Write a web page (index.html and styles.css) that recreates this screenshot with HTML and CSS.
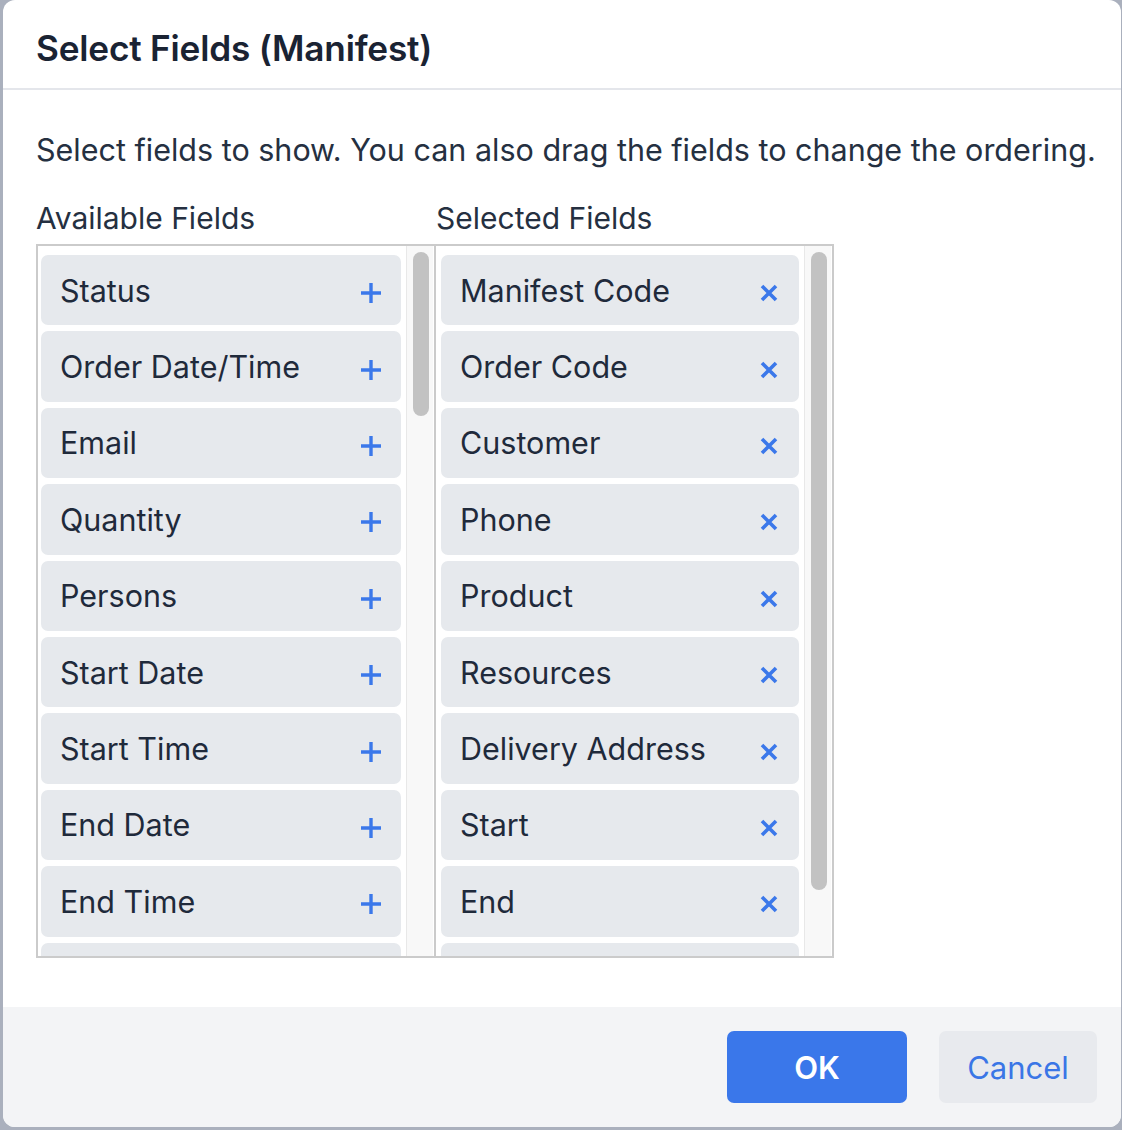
FILE: index.html
```html
<!DOCTYPE html>
<html lang="en">
<head>
<meta charset="utf-8">
<title>Select Fields (Manifest)</title>
<link rel="stylesheet" href="styles.css">
</head>
<body>
<div class="dialog">
  <div class="header"><h1 class="title">Select Fields (Manifest)</h1></div>
  <div class="content">
    <p class="desc">Select fields to show. You can also drag the fields to change the ordering.</p>
    <div class="labels">
      <div class="label">Available Fields</div>
      <div class="label">Selected Fields</div>
    </div>
    <div class="lists">
      <div class="col col-left">
        <div class="items">
          <div class="item"><span>Status</span><svg class="ico-plus" viewBox="0 0 22 22"><path d="M11 1V21M1 11H21"/></svg></div>
          <div class="item"><span>Order Date/Time</span><svg class="ico-plus" viewBox="0 0 22 22"><path d="M11 1V21M1 11H21"/></svg></div>
          <div class="item"><span>Email</span><svg class="ico-plus" viewBox="0 0 22 22"><path d="M11 1V21M1 11H21"/></svg></div>
          <div class="item"><span>Quantity</span><svg class="ico-plus" viewBox="0 0 22 22"><path d="M11 1V21M1 11H21"/></svg></div>
          <div class="item"><span>Persons</span><svg class="ico-plus" viewBox="0 0 22 22"><path d="M11 1V21M1 11H21"/></svg></div>
          <div class="item"><span>Start Date</span><svg class="ico-plus" viewBox="0 0 22 22"><path d="M11 1V21M1 11H21"/></svg></div>
          <div class="item"><span>Start Time</span><svg class="ico-plus" viewBox="0 0 22 22"><path d="M11 1V21M1 11H21"/></svg></div>
          <div class="item"><span>End Date</span><svg class="ico-plus" viewBox="0 0 22 22"><path d="M11 1V21M1 11H21"/></svg></div>
          <div class="item"><span>End Time</span><svg class="ico-plus" viewBox="0 0 22 22"><path d="M11 1V21M1 11H21"/></svg></div>
          <div class="item"></div>
        </div>
        <div class="track"><div class="thumb thumb-left"></div></div>
      </div>
      <div class="col col-right">
        <div class="items">
          <div class="item"><span>Manifest Code</span><svg class="ico-x" viewBox="0 0 18 18"><path d="M2 2L16 16M16 2L2 16"/></svg></div>
          <div class="item"><span>Order Code</span><svg class="ico-x" viewBox="0 0 18 18"><path d="M2 2L16 16M16 2L2 16"/></svg></div>
          <div class="item"><span>Customer</span><svg class="ico-x" viewBox="0 0 18 18"><path d="M2 2L16 16M16 2L2 16"/></svg></div>
          <div class="item"><span>Phone</span><svg class="ico-x" viewBox="0 0 18 18"><path d="M2 2L16 16M16 2L2 16"/></svg></div>
          <div class="item"><span>Product</span><svg class="ico-x" viewBox="0 0 18 18"><path d="M2 2L16 16M16 2L2 16"/></svg></div>
          <div class="item"><span>Resources</span><svg class="ico-x" viewBox="0 0 18 18"><path d="M2 2L16 16M16 2L2 16"/></svg></div>
          <div class="item"><span>Delivery Address</span><svg class="ico-x" viewBox="0 0 18 18"><path d="M2 2L16 16M16 2L2 16"/></svg></div>
          <div class="item"><span>Start</span><svg class="ico-x" viewBox="0 0 18 18"><path d="M2 2L16 16M16 2L2 16"/></svg></div>
          <div class="item"><span>End</span><svg class="ico-x" viewBox="0 0 18 18"><path d="M2 2L16 16M16 2L2 16"/></svg></div>
          <div class="item"></div>
        </div>
        <div class="track"><div class="thumb thumb-right"></div></div>
      </div>
    </div>
  </div>
  <div class="footer">
    <button class="btn btn-ok">OK</button>
    <button class="btn btn-cancel">Cancel</button>
  </div>
</div>
</body>
</html>
```
FILE: styles.css
```css
html, body {
  margin: 0;
  padding: 0;
  background: #aab0bd;
  height: 1130px;
  overflow: hidden;
}
body {
  font-family: Inter, "Noto Sans", "Liberation Sans", sans-serif;
  color: #1f2937;
}
.dialog {
  margin-left: 3px;
  width: 1118px;
  height: 1127px;
  background: #ffffff;
  border-radius: 12px;
  overflow: hidden;
  display: flex;
  flex-direction: column;
}
.header {
  height: 80px;
  padding-top: 8px;
  border-bottom: 2px solid #e4e6eb;
  display: flex;
  align-items: center;
  padding-left: 33px;
  flex-shrink: 0;
}
.title {
  margin: 0;
  font-size: 35.2px;
  font-weight: 600;
  color: #1a2333;
  letter-spacing: -0.2px;
}
.content {
  flex: 1;
  padding: 40px 0 0 33px;
}
.desc {
  margin: 0;
  font-size: 30.5px;
  line-height: 40px;
  color: #253041;
  white-space: nowrap;
}
.labels {
  display: flex;
  margin-top: 28px;
}
.label {
  width: 400px;
  font-size: 30px;
  line-height: 40px;
  color: #253041;
}
.lists {
  margin-top: 6px;
  width: 794px;
  height: 710px;
  border: 2px solid #cbcbcb;
  display: flex;
}
.col {
  width: 396px;
  display: flex;
}
.col-right {
  border-left: 2px solid #cbcbcb;
}
.items {
  width: 360px;
  padding: 9px 5px 0 3px;
  overflow: hidden;
  display: flex;
  flex-direction: column;
  gap: 6px;
}
.col-right .items {
  width: 358px;
  padding-left: 5px;
}
.item {
  flex-shrink: 0;
  height: 70.4px;
  background: #e6e9ed;
  border-radius: 7px;
  display: flex;
  align-items: center;
  justify-content: space-between;
  padding: 0 19px 0 19px;
  font-size: 30.5px;
  color: #1f2a3b;
}
.col-right .item {
  padding-right: 21px;
}
.ico-plus {
  width: 22px;
  height: 22px;
  margin-top: 6px;
  fill: none;
  stroke: #3b78ea;
  stroke-width: 3.4;
}
.ico-x {
  width: 18px;
  height: 18px;
  margin-top: 6px;
  fill: none;
  stroke: #3b78ea;
  stroke-width: 3.6;
}
.track {
  width: 27px;
  background: #f8f8f8;
  border-left: 1px solid #e8e8e8;
  padding-top: 6px;
  padding-left: 6px;
  box-sizing: border-box;
}
.thumb {
  width: 16px;
  background: #c2c2c2;
  border-radius: 8px;
}
.thumb-left {
  height: 164px;
}
.thumb-right {
  height: 638px;
}
.footer {
  height: 120px;
  background: #f3f4f6;
  display: flex;
  align-items: center;
  justify-content: flex-end;
  gap: 32px;
  padding-right: 24px;
  flex-shrink: 0;
}
.btn {
  height: 72px;
  border: none;
  border-radius: 7px;
  font-family: inherit;
  font-size: 31px;
  cursor: pointer;
}
.btn-ok {
  width: 180px;
  background: #3a77ea;
  color: #ffffff;
  font-weight: 600;
}
.btn-cancel {
  width: 158px;
  background: #e8eaee;
  color: #3a76e6;
}
```
